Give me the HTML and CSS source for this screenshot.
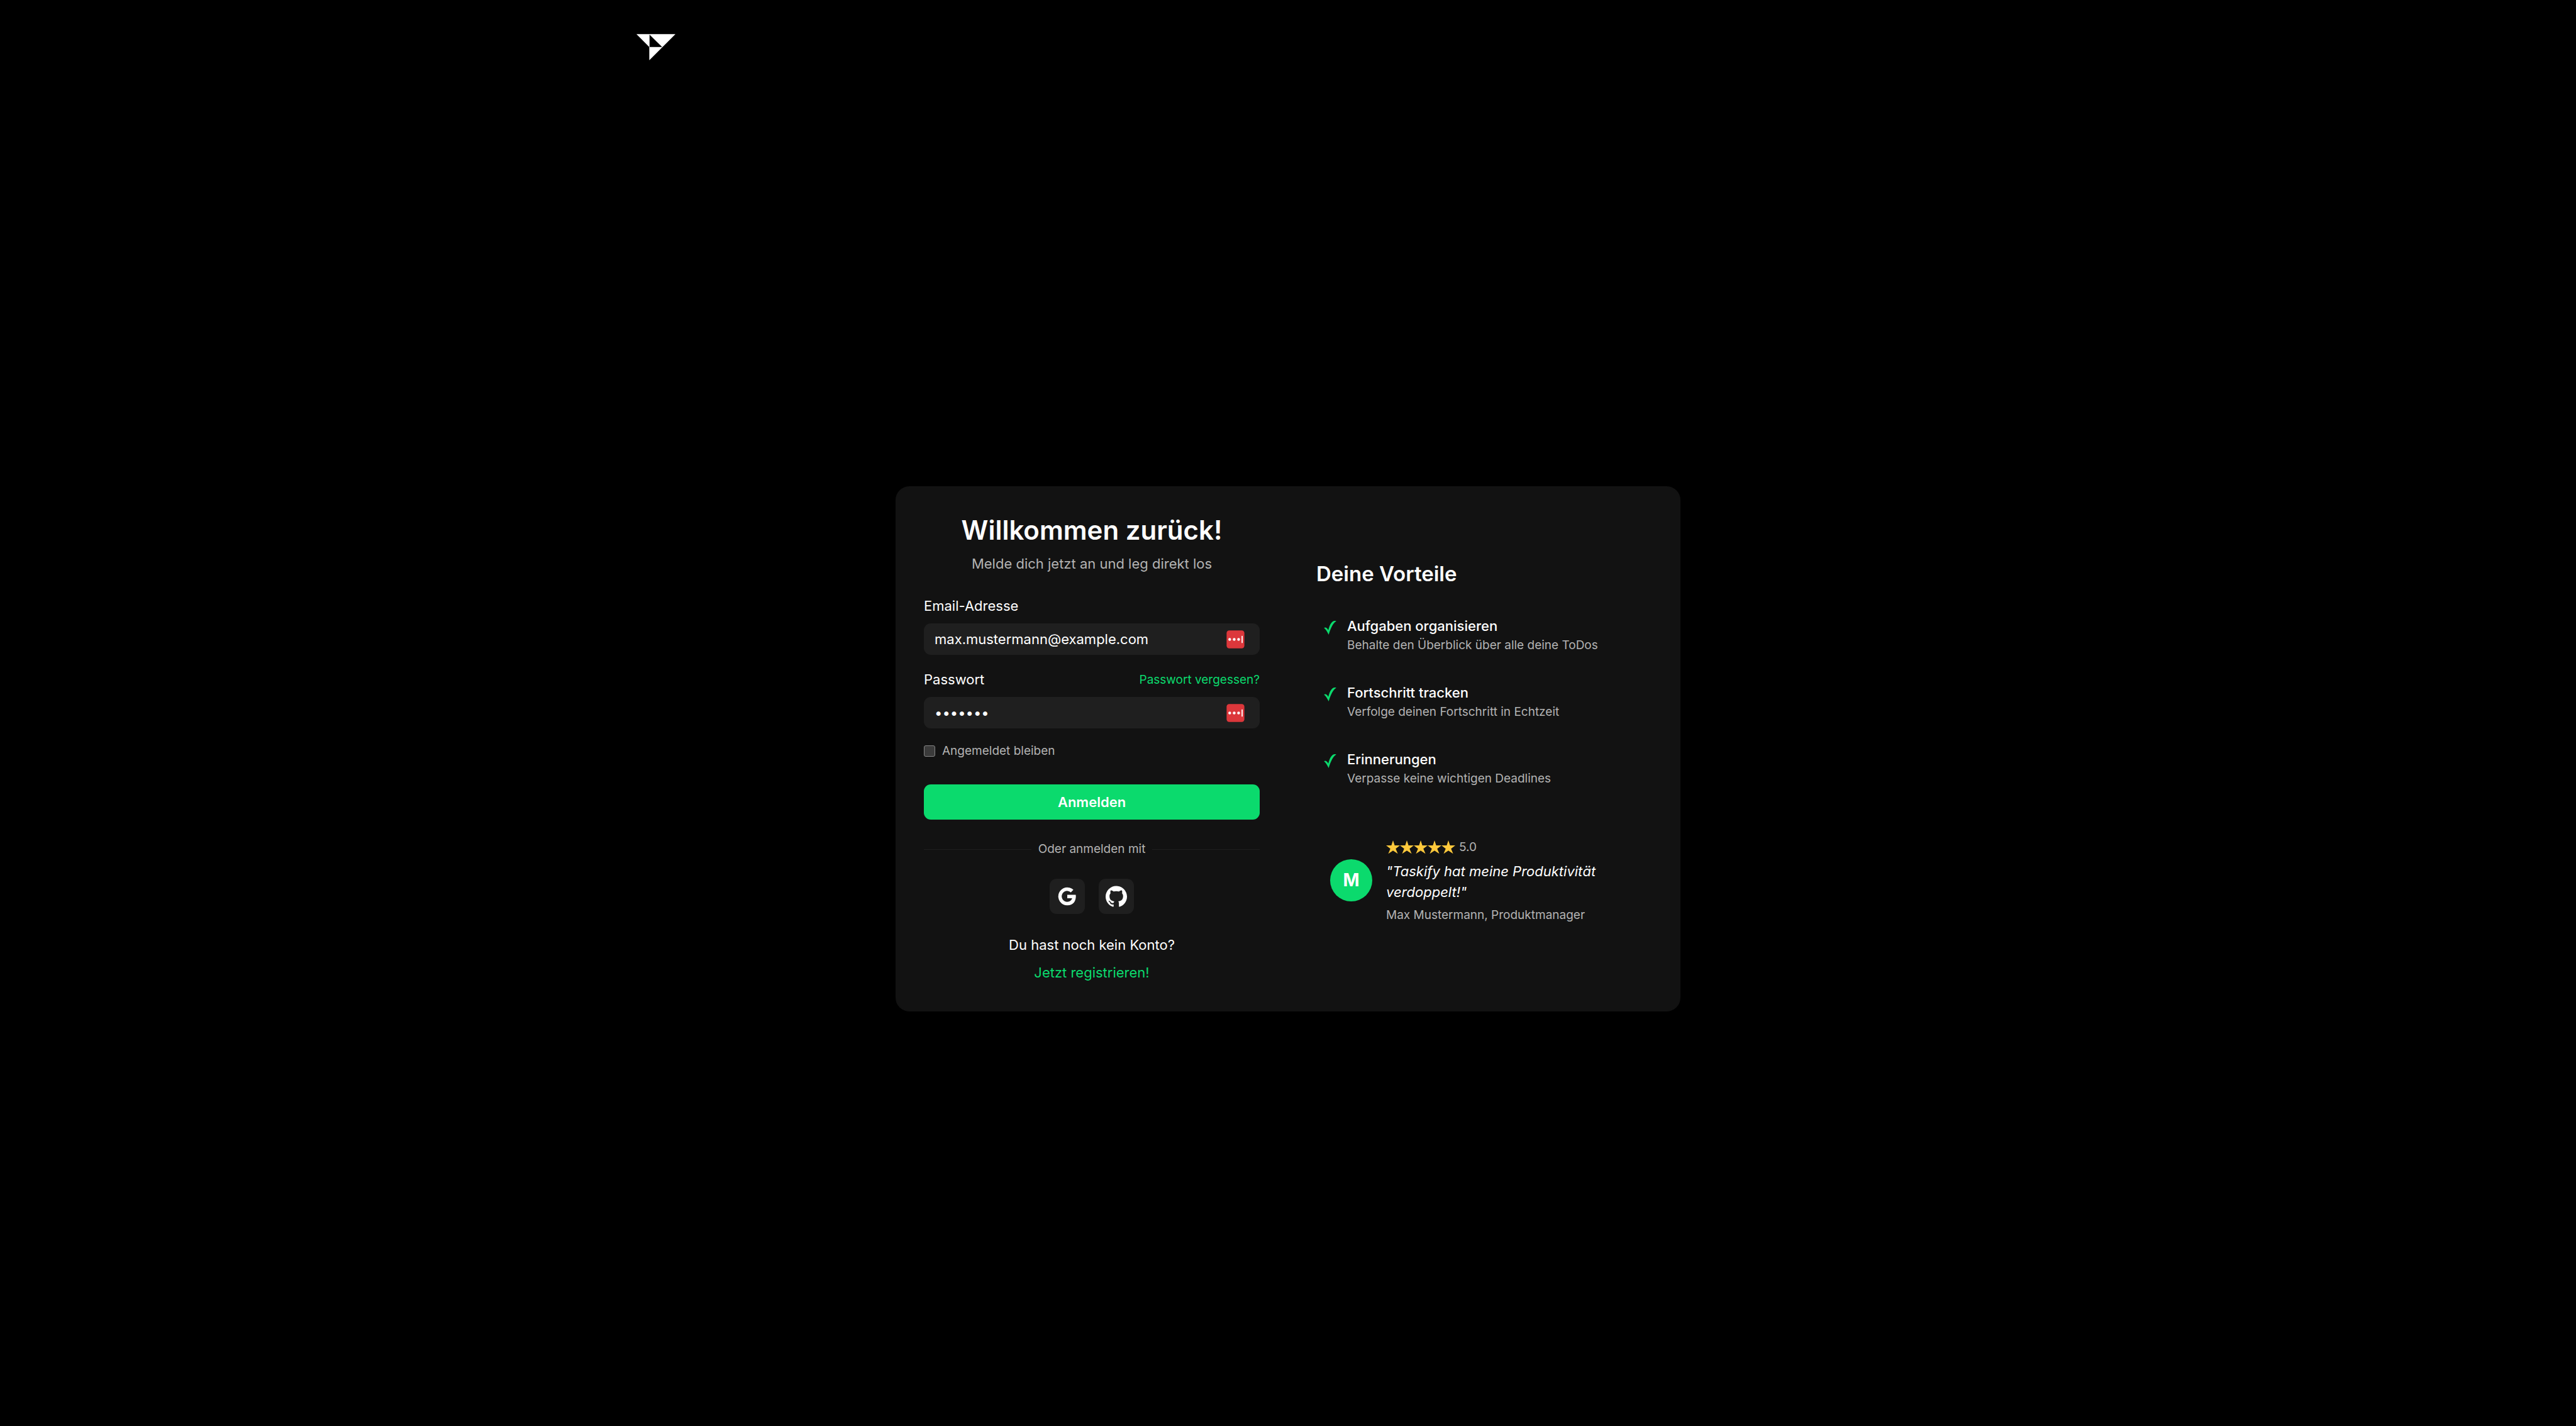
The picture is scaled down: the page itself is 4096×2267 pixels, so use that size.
FILE: index.html
```html
<!DOCTYPE html>
<html lang="de">
<head>
  <meta charset="utf-8">
  <meta name="viewport" content="width=device-width, initial-scale=1">
  <title>Taskify – Anmelden</title>
  <link rel="stylesheet" href="styles.css">
</head>
<body>
  <svg class="sprite" aria-hidden="true">
    <symbol id="check" viewBox="0 0 82 93">
      <path d="M0 48C8 41 17 46 23 54L29 62C35 36 46 10 62 2C69 -1 80 -1 82 2C58 17 44 52 31 93C22 74 12 58 0 48Z"/>
    </symbol>
    <symbol id="star" viewBox="0 0 32 32">
      <path d="M16 0L19.800 11.800H32L22.200 19.200L27 31L16 23.600L5 31L9.800 19.200L0 11.800H12.200Z"/>
    </symbol>
    <symbol id="vault" viewBox="0 0 42 42">
      <rect x=".5" y=".5" width="41" height="41" rx="6" fill="#dc373b"/>
      <circle cx="7.700" cy="21" r="3.200" fill="#fff"/>
      <circle cx="18" cy="21" r="3.200" fill="#fff"/>
      <circle cx="28.200" cy="21" r="3.200" fill="#fff"/>
      <rect x="35" y="12.500" width="2.600" height="17" rx="1" fill="#fff"/>
    </symbol>
  </svg>

  <header class="nav">
    <a class="nav-logo" href="#" aria-label="Taskify">
      <svg viewBox="0 0 88 59" aria-hidden="true"><path d="M0 0H88L29 59V29L0 0ZM29.500 1V29H58Z" fill="#fff" fill-rule="evenodd"/></svg>
    </a>
  </header>

  <main class="stage">
    <div class="card">
      <section class="login">
        <h1 class="title">Willkommen zurück!</h1>
        <p class="subtitle">Melde dich jetzt an und leg direkt los</p>

        <form class="form">
          <div class="field">
            <label class="label" for="email">Email-Adresse</label>
            <div class="control">
              <input class="input" id="email" type="email" value="max.mustermann@example.com">
              <svg class="vault" aria-hidden="true"><use href="#vault"/></svg>
            </div>
          </div>
          <div class="field">
            <div class="label-row">
              <label class="label" for="password">Passwort</label>
              <a class="forgot" href="#">Passwort vergessen?</a>
            </div>
            <div class="control">
              <input class="input" id="password" type="password" value="passwor">
              <svg class="vault" aria-hidden="true"><use href="#vault"/></svg>
            </div>
          </div>
          <div class="remember">
            <input class="checkbox" id="remember" type="checkbox">
            <label for="remember">Angemeldet bleiben</label>
          </div>
          <button class="submit" type="submit">Anmelden</button>
        </form>

        <div class="divider">Oder anmelden mit</div>

        <div class="socials">
          <button class="social" type="button" aria-label="Google">
            <svg viewBox="0 0 24 24" aria-hidden="true"><path d="M12 10.200V14.100H17.500C16.800 16.500 14.800 18.100 12 18.100A6.100 6.100 0 1 1 16 7.500L18.900 4.600A10.100 10.100 0 1 0 12 22.100C20.400 22.100 22.300 14.500 21.500 10.200Z" fill="#fff"/></svg>
          </button>
          <button class="social" type="button" aria-label="GitHub">
            <svg viewBox="0 0 24 24" aria-hidden="true"><path d="M12 .297c-6.630 0-12 5.373-12 12 0 5.303 3.438 9.800 8.205 11.385.6.113.820-.258.820-.577 0-.285-.010-1.040-.015-2.040-3.338.724-4.042-1.610-4.042-1.610C4.422 18.070 3.633 17.700 3.633 17.700c-1.087-.744.084-.729.084-.729 1.205.084 1.838 1.236 1.838 1.236 1.070 1.835 2.809 1.305 3.495.998.108-.776.417-1.305.760-1.605-2.665-.3-5.466-1.332-5.466-5.930 0-1.310.465-2.380 1.235-3.220-.135-.303-.540-1.523.105-3.176 0 0 1.005-.322 3.300 1.230.960-.267 1.980-.399 3-.405 1.020.006 2.040.138 3 .405 2.280-1.552 3.285-1.230 3.285-1.230.645 1.653.240 2.873.120 3.176.765.840 1.230 1.910 1.230 3.220 0 4.610-2.805 5.625-5.475 5.920.420.360.810 1.096.810 2.220 0 1.606-.015 2.896-.015 3.286 0 .315.210.690.825.570C20.565 22.092 24 17.592 24 12.297c0-6.627-5.373-12-12-12" fill="#fff"/></svg>
          </button>
        </div>

        <div class="signup">
          <p>Du hast noch kein Konto?</p>
          <a href="#">Jetzt registrieren!</a>
        </div>
      </section>

      <section class="benefits">
        <h2 class="benefits-title">Deine Vorteile</h2>
        <ul class="benefit-list">
          <li class="benefit">
            <svg class="check" aria-hidden="true"><use href="#check"/></svg>
            <div>
              <h3 class="benefit-name">Aufgaben organisieren</h3>
              <p class="muted">Behalte den Überblick über alle deine ToDos</p>
            </div>
          </li>
          <li class="benefit">
            <svg class="check" aria-hidden="true"><use href="#check"/></svg>
            <div>
              <h3 class="benefit-name">Fortschritt tracken</h3>
              <p class="muted">Verfolge deinen Fortschritt in Echtzeit</p>
            </div>
          </li>
          <li class="benefit">
            <svg class="check" aria-hidden="true"><use href="#check"/></svg>
            <div>
              <h3 class="benefit-name">Erinnerungen</h3>
              <p class="muted">Verpasse keine wichtigen Deadlines</p>
            </div>
          </li>
        </ul>

        <figure class="testimonial">
          <div class="avatar">M</div>
          <div class="testimonial-body">
            <div class="rating">
              <svg class="star" aria-hidden="true"><use href="#star"/></svg>
              <svg class="star" aria-hidden="true"><use href="#star"/></svg>
              <svg class="star" aria-hidden="true"><use href="#star"/></svg>
              <svg class="star" aria-hidden="true"><use href="#star"/></svg>
              <svg class="star" aria-hidden="true"><use href="#star"/></svg>
              <span class="score">5.0</span>
            </div>
            <blockquote class="quote">"Taskify hat meine Produktivität verdoppelt!"</blockquote>
            <figcaption class="muted">Max Mustermann, Produktmanager</figcaption>
          </div>
        </figure>
      </section>
    </div>
  </main>
</body>
</html>
```
FILE: styles.css
```css
*,
*::before,
*::after {
  box-sizing: border-box;
  margin: 0;
  padding: 0;
}

body {
  display: flex;
  flex-direction: column;
  min-height: 100vh;
  background: #000;
  color: #fff;
  font: 400 22px/33px Inter, "Liberation Sans", sans-serif;
}

a {
  color: #0bda6d;
  text-decoration: none;
}

button,
input {
  border: 0;
  color: inherit;
  font: inherit;
}

.sprite {
  position: absolute;
  width: 0;
  height: 0;
}

.nav {
  width: 100%;
  max-width: 2138px;
  margin: 0 auto;
  padding: 54px 33px 18px;
}

.nav-logo {
  display: block;
  width: 62px;
}

.nav-logo svg {
  display: block;
  width: 62px;
  height: 42px;
}

.stage {
  display: flex;
  flex: 1;
  align-items: center;
  justify-content: center;
}

.card {
  display: grid;
  grid-template-columns: 1fr 1fr;
  width: 100%;
  max-width: 1248px;
  border-radius: 22px;
  background: #121212;
}

.login {
  padding: 45px;
}

.title {
  font-size: 42px;
  font-weight: 600;
  line-height: 50px;
  text-align: center;
}

.subtitle {
  margin-top: 11px;
  color: #b3b3b3;
  line-height: 34px;
  text-align: center;
}

.form {
  display: flex;
  flex-direction: column;
  gap: 22px;
  margin-top: 33px;
}

.field {
  display: flex;
  flex-direction: column;
  gap: 11px;
}

.label {
  line-height: 34px;
}

.label-row {
  display: flex;
  align-items: center;
  justify-content: space-between;
}

.forgot {
  font-size: 19px;
}

.control {
  display: flex;
  align-items: center;
  height: 50px;
  padding: 0 24px 0 17px;
  border-radius: 11px;
  background: #1f1f1f;
}

.input {
  flex: 1;
  min-width: 0;
  background: none;
  outline: none;
}

.vault {
  width: 29px;
  height: 29px;
}

.remember {
  display: flex;
  align-items: center;
  gap: 11px;
  color: #b3b3b3;
  font-size: 19px;
  line-height: 28px;
}

.checkbox {
  width: 18px;
  height: 18px;
  border: 1px solid #858585;
  border-radius: 3px;
  background: #3b3b3b;
  appearance: none;
}

.submit {
  height: 56px;
  margin-top: 17px;
  border-radius: 11px;
  background: #0bda6d;
  font-weight: 600;
}

.divider {
  display: flex;
  align-items: center;
  gap: 11px;
  margin-top: 33px;
  color: #b3b3b3;
  font-size: 19px;
  line-height: 28px;
}

.divider::before,
.divider::after {
  flex: 1;
  height: 1px;
  background: #1f1f1f;
  content: "";
}

.socials {
  display: flex;
  justify-content: center;
  gap: 22px;
  margin-top: 33px;
}

.social {
  display: grid;
  place-items: center;
  width: 56px;
  height: 56px;
  border-radius: 11px;
  background: #1f1f1f;
}

.social svg {
  width: 34px;
  height: 34px;
}

.signup {
  display: flex;
  flex-direction: column;
  align-items: center;
  gap: 11px;
  margin-top: 33px;
}

.benefits {
  display: flex;
  flex-direction: column;
  justify-content: center;
  padding: 45px;
}

.benefits-title {
  font-size: 33px;
  font-weight: 600;
  line-height: 44px;
}

.benefit-list {
  display: flex;
  flex-direction: column;
  gap: 22px;
  margin-top: 33px;
  list-style: none;
}

.benefit {
  display: flex;
  gap: 16px;
  padding: 11px;
}

.check {
  width: 22px;
  height: 22px;
  margin-top: 9px;
  fill: #0bda6d;
}

.benefit-name {
  font-size: 22px;
  font-weight: 500;
  line-height: 34px;
}

.muted {
  color: #b3b3b3;
  font-size: 19px;
  line-height: 28px;
}

.testimonial {
  display: flex;
  align-items: center;
  gap: 22px;
  margin-top: 45px;
  padding: 22px;
}

.avatar {
  display: grid;
  flex: none;
  place-items: center;
  width: 67px;
  height: 67px;
  border-radius: 50%;
  background: #0bda6d;
  font-size: 28px;
  font-weight: 700;
}

.testimonial-body {
  display: flex;
  flex-direction: column;
  gap: 6px;
}

.rating {
  display: flex;
  align-items: center;
}

.star {
  width: 22px;
  height: 22px;
  fill: #ffc93c;
}

.score {
  margin-left: 6px;
  color: #b3b3b3;
  font-size: 19px;
}

.quote {
  font-style: italic;
}
```
